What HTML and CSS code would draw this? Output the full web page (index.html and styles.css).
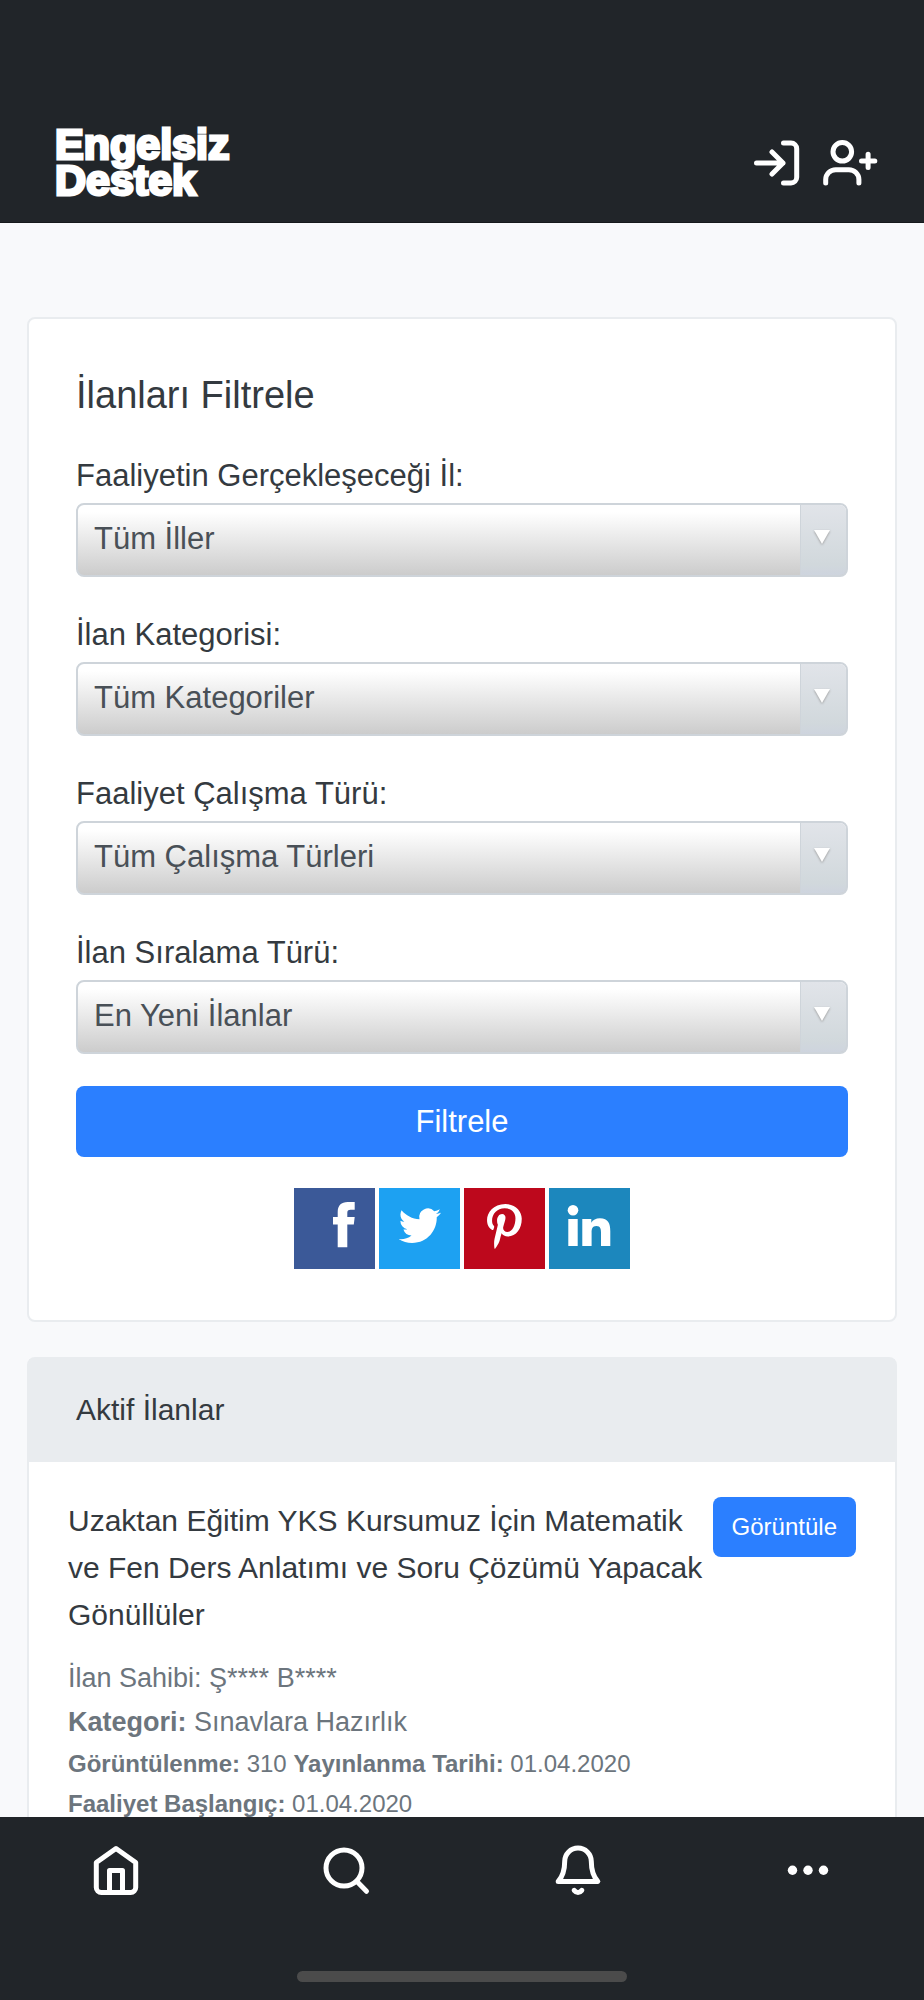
FILE: index.html
```html
<!DOCTYPE html>
<html lang="tr">
  <head>
    <meta charset="UTF-8" />
    <meta name="viewport" content="width=device-width, initial-scale=1.0" />
    <title>Engelsiz Destek</title>
    <link rel="stylesheet" href="styles.css">
  </head>
  <body>
    <header class="topbar">
      <a href="#" class="logo">Engelsiz<br />Destek</a>
      <nav class="account-links">
        <a href="#" aria-label="Giriş Yap">
          <svg class="icon" width="54" height="54" viewBox="0 0 54 54">
            <path d="M6.5 27H33M22 16l11 11-11 11" />
            <path d="M33.5 7H41a5.7 5.7 0 0 1 5.7 5.7v28.6A5.7 5.7 0 0 1 41 47h-7.5" />
          </svg>
        </a>
        <a href="#" aria-label="Kayıt Ol">
          <svg class="icon" width="60" height="54" viewBox="0 0 60 54">
            <circle cx="22.3" cy="15.8" r="9.3" />
            <path d="M5.7 47v-3.5a10 10 0 0 1 10-9.8h13.200a10 10 0 0 1 10 9.800V47" />
            <path d="M41.5 25h13.3M48.1 18.3v13.3" />
          </svg>
        </a>
      </nav>
    </header>

    <main class="content">
      <section class="card filter-card">
        <h1>İlanları Filtrele</h1>
        <form>
          <div class="fields">
            <div class="field">
              <label for="city">Faaliyetin Gerçekleşeceği İl:</label>
              <div class="select-box">
                <select id="city" name="city">
                  <option>Tüm İller</option>
                </select>
              </div>
            </div>
            <div class="field">
              <label for="category">İlan Kategorisi:</label>
              <div class="select-box">
                <select id="category" name="category">
                  <option>Tüm Kategoriler</option>
                </select>
              </div>
            </div>
            <div class="field">
              <label for="workType">Faaliyet Çalışma Türü:</label>
              <div class="select-box">
                <select id="workType" name="workType">
                  <option>Tüm Çalışma Türleri</option>
                </select>
              </div>
            </div>
            <div class="field">
              <label for="order">İlan Sıralama Türü:</label>
              <div class="select-box">
                <select id="order" name="order">
                  <option>En Yeni İlanlar</option>
                </select>
              </div>
            </div>
          </div>
          <button type="button" class="filter-button">Filtrele</button>
        </form>

        <div class="social">
          <a href="#" class="facebook" aria-label="Facebook">
            <svg width="81" height="81" viewBox="0 0 81 81">
              <path d="M43.7 59.3V36.5H39V29h4.7v-5c0-6.500 3.500-10 10-10h7v7.800h-4c-2.600 0-3.400 1-3.400 3.300V29h7.400l-.9 7.500h-6.500v22.800z" />
            </svg>
          </a>
          <a href="#" class="twitter" aria-label="Twitter">
            <svg width="81" height="81" viewBox="0 0 81 81">
              <path transform="translate(19.7 16.6) scale(1.765)" d="M23.953 4.570a10 10 0 01-2.825.775 4.958 4.958 0 002.163-2.723c-.951.555-2.005.959-3.127 1.184a4.920 4.920 0 00-8.384 4.482C7.690 8.095 4.067 6.130 1.640 3.162a4.822 4.822 0 00-.666 2.475c0 1.710.870 3.213 2.188 4.096a4.904 4.904 0 01-2.228-.616v.06a4.923 4.923 0 003.946 4.827 4.996 4.996 0 01-2.212.085 4.936 4.936 0 004.604 3.417 9.867 9.867 0 01-6.102 2.105c-.39 0-.779-.023-1.170-.067a13.995 13.995 0 007.557 2.209c9.053 0 13.998-7.496 13.998-13.985 0-.21 0-.42-.015-.63A9.935 9.935 0 0024 4.590z" />
            </svg>
          </a>
          <a href="#" class="pinterest" aria-label="Pinterest">
            <svg width="81" height="81" viewBox="0 0 81 81">
              <path transform="translate(9.2 7.2) scale(1.95)" d="M16.539 4.500c-6.277 0-9.442 4.500-9.442 8.253 0 2.272.86 4.293 2.705 5.046.303.125.574.005.662-.33.061-.231.205-.816.27-1.060.088-.331.053-.447-.191-.736-.532-.627-.873-1.439-.873-2.591 0-3.338 2.498-6.327 6.505-6.327 3.548 0 5.497 2.168 5.497 5.062 0 3.810-1.686 7.025-4.188 7.025-1.382 0-2.416-1.142-2.085-2.545.397-1.674 1.166-3.480 1.166-4.689 0-1.081-.581-1.983-1.782-1.983-1.413 0-2.548 1.462-2.548 3.419 0 1.247.421 2.091.421 2.091l-1.699 7.199c-.505 2.137-.076 4.755-.039 5.019.021.158.223.196.314.077.13-.17 1.813-2.247 2.384-4.324.162-.587.929-3.631.929-3.631.46.876 1.801 1.646 3.227 1.646 4.247 0 7.128-3.871 7.128-9.053.003-3.918-3.317-7.568-8.361-7.568z" />
            </svg>
          </a>
          <a href="#" class="linkedin" aria-label="LinkedIn">
            <svg width="81" height="81" viewBox="0 0 81 81">
              <circle cx="24" cy="22.3" r="5.3" />
              <path d="M19.3 31h9.4v27h-9.4zM33.3 31h9v3.700c1.500-2.600 4.700-4.400 8.600-4.400 8.500 0 10.400 5.500 10.400 12.900V58H52V44.800c0-3.200-.3-6.800-4.600-6.800s-4.800 3.200-4.800 6.600V58h-9.300z" />
            </svg>
          </a>
        </div>
      </section>

      <section class="card">
        <h2 class="card-header">Aktif İlanlar</h2>
        <article class="listing">
          <div class="listing-top">
            <h3>Uzaktan Eğitim YKS Kursumuz İçin Matematik ve Fen Ders Anlatımı ve Soru Çözümü Yapacak Gönüllüler</h3>
            <a href="#" class="view-button">Görüntüle</a>
          </div>
          <p class="owner">İlan Sahibi: Ş**** B****</p>
          <p class="category"><b>Kategori:</b> Sınavlara Hazırlık</p>
          <p class="details">
            <b>Görüntülenme:</b> 310 <b>Yayınlanma Tarihi:</b> 01.04.2020<br />
            <b>Faaliyet Başlangıç:</b> 01.04.2020
          </p>
        </article>
      </section>
    </main>

    <footer class="bottombar">
      <nav class="tabs">
        <a href="#" aria-label="Ana Sayfa">
          <svg class="icon" width="48" height="54" viewBox="0 0 48 54">
            <path d="M24 5.5L4.3 19.5v25a5 5 0 0 0 5 5h29.4a5 5 0 0 0 5-5v-25z" />
            <path d="M17.5 49V27.5h13V49" />
          </svg>
        </a>
        <a href="#" aria-label="Ara">
          <svg class="icon" width="48" height="54" viewBox="0 0 48 54">
            <circle cx="21" cy="25" r="18" />
            <path d="M34 38.5l9.5 9.8" />
          </svg>
        </a>
        <a href="#" aria-label="Bildirimler">
          <svg class="icon" width="48" height="54" viewBox="0 0 48 54">
            <path d="M10.7 18.3a13.3 13.3 0 0 1 26.6 0c0 9 2 15.2 6.5 20.2H4.2c4.5-5 6.5-11.2 6.5-20.2z" />
            <path d="M20.2 47.3q3.8 4.6 7.6 0" />
          </svg>
        </a>
        <a href="#" aria-label="Daha Fazla">
          <svg class="dots" width="48" height="54" viewBox="0 0 48 54">
            <circle cx="7.5" cy="27.3" r="4.7" />
            <circle cx="23" cy="27.3" r="4.7" />
            <circle cx="38.5" cy="27.3" r="4.7" />
          </svg>
        </a>
      </nav>
      <div class="home-indicator"></div>
    </footer>
  </body>
</html>
```
FILE: styles.css
```css
* {
  box-sizing: border-box;
}
body {
  margin: 0;
  height: 100vh;
  display: flex;
  flex-direction: column;
  background-color: #f8f9fb;
  color: #343a40;
  font-family: "Liberation Sans", Arial, sans-serif;
  font-size: 30px;
}
h1,
h2,
h3,
p {
  margin: 0;
  font-weight: normal;
}
a {
  text-decoration: none;
}

/* top bar */
.topbar {
  display: flex;
  justify-content: space-between;
  align-items: center;
  padding: 103px 44px 0 55px;
  height: 223px;
  flex-shrink: 0;
  background-color: #212529;
  border-bottom: 1px solid #16191c;
}
.logo {
  padding-bottom: 2px;
  color: white;
  font-size: 43px;
  font-weight: bold;
  line-height: 36px;
  -webkit-text-stroke: 3px white;
}
.account-links {
  display: flex;
  gap: 16px;
}
.icon {
  display: block;
  fill: none;
  stroke: white;
  stroke-width: 5;
  stroke-linecap: round;
  stroke-linejoin: round;
}

/* page content scrolls between the two bars */
.content {
  flex: 1;
  min-height: 0;
  overflow-y: auto;
  scrollbar-width: none;
  padding: 94px 27px 0;
}
.card {
  background-color: white;
  border: 2px solid #e9ecef;
  border-radius: 8px;
  margin-bottom: 35px;
}
.filter-card {
  padding: 48px 47px 51px;
}
h1 {
  font-size: 38px;
  line-height: 56px;
  margin-bottom: 30px;
}
.fields {
  display: flex;
  flex-direction: column;
  gap: 35px;
  margin-bottom: 32px;
}
.field label {
  display: block;
  font-size: 31px;
  line-height: 46px;
  margin-bottom: 4px;
}
.select-box {
  position: relative;
}
.select-box select {
  display: block;
  width: 100%;
  height: 74px;
  padding: 0 64px 3px 16px;
  appearance: none;
  border: 2px solid #ced4da;
  border-radius: 8px;
  background: linear-gradient(white 10%, #cccccc);
  color: #495057;
  font-family: inherit;
  font-size: 31px;
}
.select-box::after {
  content: "";
  position: absolute;
  top: 2px;
  right: 2px;
  bottom: 2px;
  width: 45px;
  border-left: 1px solid #ced4da;
  border-radius: 0 6px 6px 0;
  background: linear-gradient(#e1e4e9, #d1d8dc 85%, #ced4de);
  pointer-events: none;
}
.select-box::before {
  content: "";
  position: absolute;
  z-index: 1;
  top: 27px;
  right: 18px;
  border-left: 8px solid transparent;
  border-right: 8px solid transparent;
  border-top: 14px solid white;
  filter: drop-shadow(0 1px 1px #999999);
  pointer-events: none;
}
.filter-button {
  display: block;
  width: 100%;
  height: 71px;
  border: none;
  border-radius: 8px;
  background-color: #2b7fff;
  color: white;
  font-family: inherit;
  font-size: 31px;
  cursor: pointer;
}
.social {
  display: flex;
  justify-content: center;
  gap: 4px;
  margin-top: 31px;
}
.social svg {
  display: block;
  fill: white;
}
.facebook {
  background-color: #3b5998;
}
.twitter {
  background-color: #1da1f2;
}
.pinterest {
  background-color: #bd081c;
}
.linkedin {
  background-color: #1c87bd;
}

/* active listings */
.card-header {
  padding: 28px 47px 29px;
  background-color: #e9ecef;
  font-size: 30px;
  line-height: 46px;
}
.listing {
  padding: 35px 39px 40px;
  color: #6c757d;
}
.listing-top {
  display: flex;
  align-items: flex-start;
  justify-content: space-between;
  margin-bottom: 18px;
}
h3 {
  color: #343a40;
  font-size: 30px;
  line-height: 47px;
}
.view-button {
  flex-shrink: 0;
  padding: 0 19px;
  border-radius: 8px;
  background-color: #2b7fff;
  color: white;
  font-size: 24px;
  line-height: 60px;
}
.owner,
.category {
  font-size: 27px;
  line-height: 44px;
}
.details {
  font-size: 24px;
  line-height: 40px;
}

/* bottom bar */
.bottombar {
  display: flex;
  flex-direction: column;
  justify-content: space-between;
  align-items: center;
  height: 183px;
  flex-shrink: 0;
  padding: 26px 0 18px;
  background-color: #212529;
}
.tabs {
  display: grid;
  grid-template-columns: repeat(4, 1fr);
  justify-items: center;
  width: 100%;
}
.dots {
  display: block;
  fill: white;
}
.home-indicator {
  width: 330px;
  height: 11px;
  border-radius: 6px;
  background-color: #4b4b4b;
}
```
